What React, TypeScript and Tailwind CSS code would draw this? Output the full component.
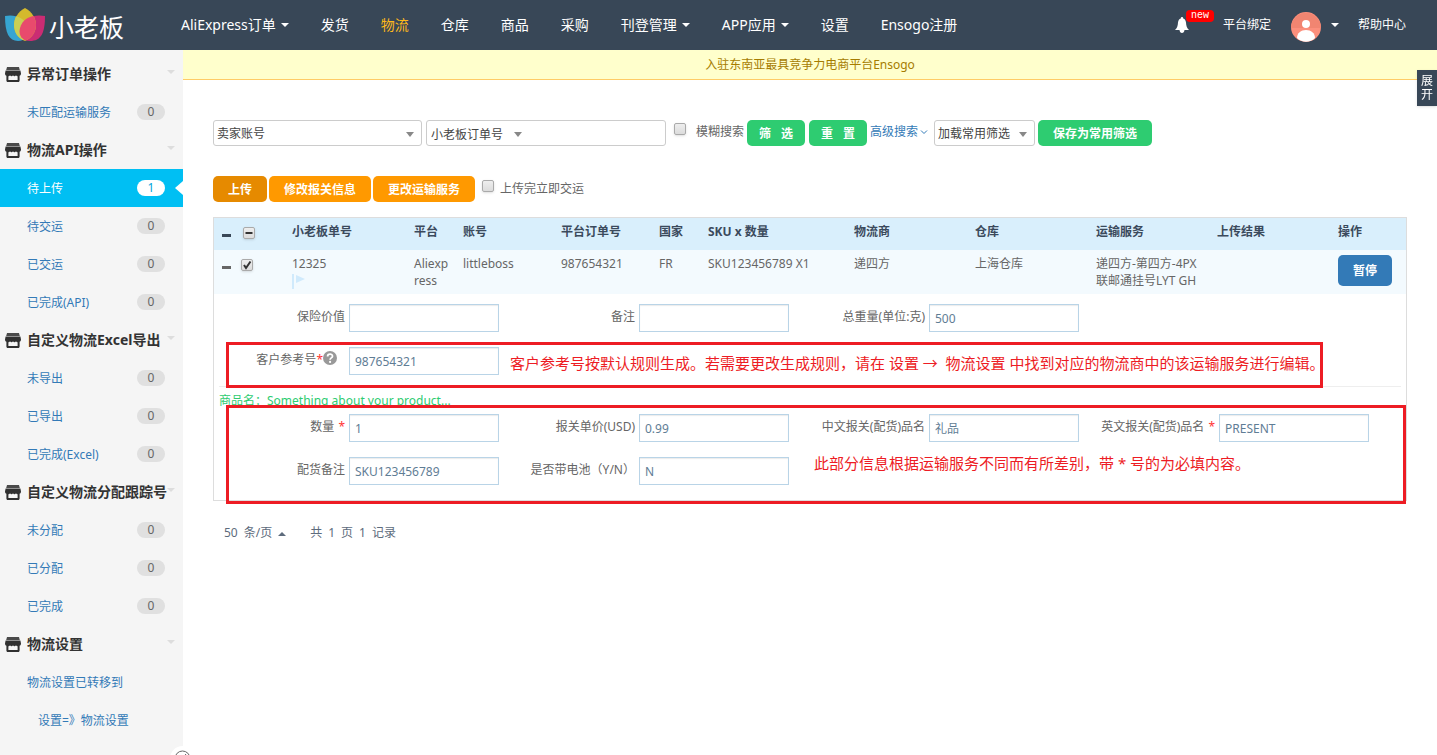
import type { ReactNode } from "react";

const navItems = [
  { label: "AliExpress订单", caret: true },
  { label: "发货" },
  { label: "物流", active: true },
  { label: "仓库" },
  { label: "商品" },
  { label: "采购" },
  { label: "刊登管理", caret: true },
  { label: "APP应用", caret: true },
  { label: "设置" },
  { label: "Ensogo注册" },
];

const menu = [
  { title: "异常订单操作", items: [{ label: "未匹配运输服务", count: 0 }] },
  {
    title: "物流API操作",
    items: [
      { label: "待上传", count: 1, active: true },
      { label: "待交运", count: 0 },
      { label: "已交运", count: 0 },
      { label: "已完成(API)", count: 0 },
    ],
  },
  {
    title: "自定义物流Excel导出",
    items: [
      { label: "未导出", count: 0 },
      { label: "已导出", count: 0 },
      { label: "已完成(Excel)", count: 0 },
    ],
  },
  {
    title: "自定义物流分配跟踪号",
    items: [
      { label: "未分配", count: 0 },
      { label: "已分配", count: 0 },
      { label: "已完成", count: 0 },
    ],
  },
];

const Caret = ({ className = "" }: { className?: string }) => (
  <svg viewBox="0 0 8 4" className={`h-1 w-2 shrink-0 fill-current ${className}`}>
    <path d="M0 0h8L4 4z" />
  </svg>
);

const StoreIcon = () => (
  <svg viewBox="0 0 16 15" className="h-[15px] w-4 shrink-0">
    <path fill="#4a4a4a" d="M2 0h12l.8 3H1.200z" />
    <path
      fill="#303030"
      d="M.6 3.500h14.800L16 6.500c0 1.300-.6 2-1.400 2.200V13.500c0 .9-.5 1.500-1.400 1.500H2.800c-.9 0-1.400-.6-1.400-1.500V8.700C.6 8.500 0 7.800 0 6.500z"
    />
    <path
      fill="#f5f5f5"
      d="M3.400 9.200c.8 0 1.300-.4 1.600-1 .4.700.9 1 1.500 1s1.200-.3 1.500-1c.3.7.9 1 1.500 1s1.100-.3 1.500-1c.3.6.8 1 1.600 1V13H3.400z"
    />
  </svg>
);

const yellowPetal = "M20 0c7 4 11 10 11 17 0 7-4 13-11 16C12 30 9 23 9 17 9 10 13 4 20 0z";
const bluePetal = "M0 8c10-2 20 2 22 10 2 9-2 15-9 15C4 33 0 25 0 8z";
const pinkPetal = "M40 8c-10-2-22 1-25 12-2 8 3 13 10 13 11 0 15-8 15-25z";

const Logo = () => (
  <a href="#" className="flex w-[165px] shrink-0 items-center gap-1 pl-[5px] text-white">
    <svg viewBox="0 0 40 34" className="h-[34px] w-10">
      <clipPath id="petal">
        <path d={yellowPetal} />
      </clipPath>
      <path fill="#36a5d2" d={bluePetal} />
      <path fill="#cb2c73" d={pinkPetal} />
      <path fill="#d4b92c" d={yellowPetal} />
      <g clipPath="url(#petal)">
        <path fill="#c9cf55" d={bluePetal} />
        <path fill="#e84a6d" d={pinkPetal} />
      </g>
    </svg>
    <span className="pt-1 text-[25px] leading-[46px]">小老板</span>
  </a>
);

const Header = () => (
  <header className="flex h-[50px] items-center bg-[#384757] text-white">
    <Logo />
    <nav className="flex">
      {navItems.map((item) => (
        <a
          key={item.label}
          href="#"
          className={`flex items-center gap-[5px] px-4 text-sm leading-[50px] whitespace-nowrap ${
            item.active ? "text-[#ffba1a]" : ""
          }`}
        >
          {item.label}
          {item.caret && <Caret />}
        </a>
      ))}
    </nav>
    <div className="ml-auto flex items-center pr-[31px] text-xs whitespace-nowrap">
      <button type="button" aria-label="消息" className="relative mr-[34px]">
        <svg viewBox="0 0 14 16" className="h-4 w-3.5 fill-white">
          <path d="M7 0c.8 0 1.200.6 1.200 1.400C10 2 10.800 3.500 11 5.500c.2 3 .8 5.500 3 7.500H0c2.200-2 2.800-4.500 3-7.500.2-2 1-3.500 2.800-4.100C5.800.6 6.200 0 7 0zM4.500 13h5C9.300 15 8.300 16 7 16s-2.300-1-2.500-3z" />
        </svg>
        <span className="absolute -top-[7px] left-[11px] h-3 w-7 rounded bg-[#f00] text-center font-['Liberation_Mono',monospace] text-[10px] leading-3">
          new
        </span>
      </button>
      <a href="#">平台绑定</a>
      <button type="button" aria-label="账户" className="mr-[19px] ml-5 flex items-center gap-2.5">
        <svg viewBox="0 0 30 30" className="mt-1 size-[30px]">
          <circle cx="15" cy="15" r="15" fill="#fc8f7c" />
          <path fill="#f18571" d="M0 16a15 15 0 0 1 30 0z" />
          <circle cx="15" cy="12" r="4" fill="#fff" />
          <path fill="#fff" d="M6 26c0-5 4-8 9-8s9 3 9 8c-5 5-13 5-18 0z" />
        </svg>
        <Caret />
      </button>
      <a href="#">帮助中心</a>
    </div>
  </header>
);

const MenuTitle = ({ children }: { children: ReactNode }) => (
  <h2 className="flex h-[38px] items-center pr-2 pl-[5px] text-sm font-bold whitespace-nowrap text-[#333]">
    <StoreIcon />
    <span className="ml-1.5 flex-1">{children}</span>
    <Caret className="mb-1 text-[#ddd]" />
  </h2>
);

const Sidebar = () => (
  <aside className="w-[183px] shrink-0 bg-[#f5f5f5] pt-[5px] text-xs text-[#337ab7]">
    {menu.map((group) => (
      <section key={group.title}>
        <MenuTitle>{group.title}</MenuTitle>
        {group.items.map((item) => (
          <a
            key={item.label}
            href="#"
            className={`relative flex h-[38px] items-center justify-between pr-[18px] pl-[27px] ${
              item.active ? "bg-[#00bff3] text-white" : ""
            }`}
          >
            <span className="pt-0.5">{item.label}</span>
            <span
              className={`h-4 w-7 rounded-full text-center leading-4 ${
                item.active ? "bg-white text-[#00a5dc]" : "bg-[#e0e0e0] text-[#666]"
              }`}
            >
              {item.count}
            </span>
            {item.active && (
              <svg viewBox="0 0 8 14" className="absolute right-0 h-3.5 w-2 fill-white">
                <path d="M8 0v14L0 7z" />
              </svg>
            )}
          </a>
        ))}
      </section>
    ))}
    <MenuTitle>物流设置</MenuTitle>
    <a href="#" className="block pt-0.5 pl-[27px] leading-9">
      物流设置已转移到
    </a>
    <a href="#" className="block pt-0.5 pl-[38px] leading-9">
      设置=》物流设置
    </a>
  </aside>
);

const DropDown = ({
  label,
  wrap,
  arrow,
  pad = "pl-[3px]",
}: {
  label: string;
  wrap: string;
  arrow: string;
  pad?: string;
}) => (
  <span className={`relative flex h-[26px] ${wrap}`}>
    <select aria-label={label} className={`w-full appearance-none rounded bg-transparent pt-0.5 text-[#444] outline-none ${pad}`}>
      <option>{label}</option>
    </select>
    <svg viewBox="0 0 8 5" className={`pointer-events-none absolute top-[11px] h-[5px] w-2 fill-[#888] ${arrow}`}>
      <path d="M0 0h8L4 5z" />
    </svg>
  </span>
);

const CheckBox = ({ id, label, state }: { id: string; label?: string; state?: "checked" | "mixed" }) => (
  <span className="relative inline-block size-3">
    <input
      id={id}
      type="checkbox"
      aria-label={label}
      defaultChecked={state === "checked"}
      className="block size-3 appearance-none rounded-[2px] border border-[#aaa] bg-linear-to-b from-[#eee] to-[#dcdcdc] shadow-sm"
    />
    {state && (
      <svg viewBox="0 0 12 12" className="pointer-events-none absolute inset-0 size-3 fill-none stroke-[#333] stroke-2">
        <path d={state === "checked" ? "M3 6l2 3 4.500-6.500" : "M2.500 6h7"} />
      </svg>
    )}
  </span>
);

const greenBtn = "h-[26px] rounded-[5px] bg-[#2ecc71] pt-0.5 font-bold text-white whitespace-nowrap";
const orangeBtn = "h-[26px] rounded-[5px] px-[15px] pt-0.5 font-bold text-white whitespace-nowrap";

const Filters = () => (
  <form className="flex items-start">
    <DropDown label="卖家账号" wrap="w-[209px] mr-1 rounded-[3px] border border-[#ccc]" arrow="right-[7px]" />
    <div className="flex h-[26px] w-60 rounded-[3px] border border-[#ccc]">
      <DropDown label="小老板订单号" wrap="w-[98px]" arrow="right-[3px]" pad="pl-1" />
      <input aria-label="订单号" className="min-w-0 flex-1 outline-none" />
    </div>
    <span className="mt-[3px] ml-2 flex">
      <CheckBox id="fuzzy" />
    </span>
    <label htmlFor="fuzzy" className="mr-[3px] ml-2.5 leading-6">
      模糊搜索
    </label>
    <button type="button" className={`${greenBtn} mr-1 flex w-[58px] items-center justify-center gap-2.5`}>
      <span>筛</span>
      <span>选</span>
    </button>
    <button type="button" className={`${greenBtn} mr-[3px] flex w-[58px] items-center justify-center gap-2.5`}>
      <span>重</span>
      <span>置</span>
    </button>
    <a href="#" className="mr-1.5 flex items-center gap-0.5 leading-6 text-[#337ab7]">
      高级搜索
      <svg viewBox="0 0 8 5" className="h-[5px] w-2 fill-none stroke-current">
        <path d="M1 .5l3 3 3-3" />
      </svg>
    </a>
    <DropDown label="加载常用筛选" wrap="w-[101px] mr-[3px] rounded-[3px] border border-[#ccc]" arrow="right-[7px]" />
    <button type="button" className={`${greenBtn} px-[15px]`}>
      保存为常用筛选
    </button>
  </form>
);

const Field = ({
  id,
  label,
  value = "",
  children,
}: {
  id: string;
  label: string;
  value?: string;
  children?: ReactNode;
}) => (
  <div className="flex h-7 items-start gap-1">
    <label htmlFor={id} className="flex w-[126px] justify-end leading-[26px] whitespace-nowrap">
      {label}
      {children}
    </label>
    <input
      id={id}
      defaultValue={value}
      className="h-7 w-[150px] border border-[#b9d4e7] bg-white px-[5px] text-[#5f7d95] shadow-[inset_0_1px_1px_rgba(0,0,0,0.08)] outline-none"
    />
  </div>
);

const Required = () => <span className="pl-1 text-[#f33]">*</span>;

const HelpIcon = () => (
  <svg viewBox="0 0 14 14" className="mt-1 mr-2 size-3.5">
    <circle cx="7" cy="7" r="7" fill="#999" />
    <path d="M4.600 5.400C4.600 2.400 9.500 2.400 9.500 5.200 9.500 6.900 7.100 6.900 7.100 8.700" fill="none" stroke="#fff" strokeWidth="1.800" />
    <circle cx="7.100" cy="10.900" r="1.100" fill="#fff" />
  </svg>
);

const fieldGrid = "grid grid-cols-[repeat(4,290px)]";

const OrderDetails = () => (
  <div className="pt-2.5 pr-[5px] pb-[15px] pl-[5px]">
    <div className={fieldGrid}>
      <Field id="insurance" label="保险价值" />
      <Field id="remark" label="备注" />
      <Field id="weight" label="总重量(单位:克)" value="500" />
    </div>
    <div className={`relative mt-[15px] w-[1160px] ${fieldGrid}`}>
      <Field id="reference" label="客户参考号" value="987654321">
        <span className="text-[#f33]">*</span>
        <HelpIcon />
      </Field>
      <p className="col-span-3 h-7 pl-px text-[15px] leading-8 whitespace-nowrap text-[#ed1c24]">
        客户参考号按默认规则生成。若需要更改生成规则，请在 设置 →&nbsp; 物流设置 中找到对应的物流商中的该运输服务进行编辑。
      </p>
      <div className="pointer-events-none absolute -top-[5px] right-14 -bottom-[13px] left-[7px] z-10 border-3 border-[#ed1c24]" />
    </div>
    <p className="mt-[11px] border-t border-[#eee] leading-[27px] text-[#2ecc71]">商品名：Something about your product...</p>
    <div className={`relative w-[1160px] gap-y-[15px] ${fieldGrid}`}>
      <Field id="quantity" label="数量" value="1">
        <Required />
      </Field>
      <Field id="price" label="报关单价(USD)" value="0.99" />
      <Field id="name-cn" label="中文报关(配货)品名" value="礼品" />
      <Field id="name-en" label="英文报关(配货)品名" value="PRESENT">
        <Required />
      </Field>
      <Field id="note" label="配货备注" value="SKU123456789" />
      <Field id="battery" label="是否带电池（Y/N）" value="N" />
      <p className="col-span-2 pl-[15px] text-[15px] leading-3 whitespace-nowrap text-[#ed1c24]">
        此部分信息根据运输服务不同而有所差别，带 * 号的为必填内容。
      </p>
      <div className="pointer-events-none absolute -top-[9px] -right-[27px] -bottom-[19px] left-[7px] z-10 border-3 border-[#ed1c24]" />
    </div>
  </div>
);

const OrderTable = () => (
  <table className="mt-[15px] w-full table-fixed border-separate border-spacing-0 border border-[#ddd] text-left">
    <colgroup>
      <col className="w-[70px]" />
      <col className="w-[122px]" />
      <col className="w-[49px]" />
      <col className="w-[98px]" />
      <col className="w-[98px]" />
      <col className="w-[49px]" />
      <col className="w-[146px]" />
      <col className="w-[121px]" />
      <col className="w-[121px]" />
      <col className="w-[121px]" />
      <col className="w-[121px]" />
      <col className="w-[76px]" />
    </colgroup>
    <thead>
      <tr className="h-8 bg-[#d9effc] align-top leading-[17px] whitespace-nowrap text-[#3b4a5c] *:p-0 *:pt-[5px] *:pl-2">
        <th>
          <span className="flex items-center gap-3 pt-1">
            <span className="mt-[5px] h-[3px] w-[9px] bg-[#384757]" />
            <CheckBox id="all" label="全选" state="mixed" />
          </span>
        </th>
        <th>小老板单号</th>
        <th>平台</th>
        <th>账号</th>
        <th>平台订单号</th>
        <th>国家</th>
        <th>SKU x 数量</th>
        <th>物流商</th>
        <th>仓库</th>
        <th>运输服务</th>
        <th>上传结果</th>
        <th>操作</th>
      </tr>
    </thead>
    <tbody>
      <tr className="h-11 bg-[#f3fafe] align-top leading-[17px] break-all *:p-0 *:pt-[5px] *:pr-1 *:pl-2">
        <td>
          <span className="flex items-center gap-2.5 pt-1">
            <span className="mt-[5px] h-[3px] w-[9px] bg-[#666]" />
            <CheckBox id="order" label="选择订单" state="checked" />
          </span>
        </td>
        <td>
          12325
          <svg viewBox="0 0 13 15" className="mt-0.5 h-[15px] w-[13px] fill-[#d0eafc]">
            <path d="M0 0h2v15H0zM4 1l9 4-9 4z" />
          </svg>
        </td>
        <td>Aliexpress</td>
        <td>littleboss</td>
        <td>987654321</td>
        <td>FR</td>
        <td>SKU123456789 X1</td>
        <td>递四方</td>
        <td>上海仓库</td>
        <td>递四方-第四方-4PX联邮通挂号LYT GH</td>
        <td />
        <td>
          <button type="button" className="h-[31px] w-[54px] rounded-[5px] bg-[#337ab7] font-bold text-white">
            暂停
          </button>
        </td>
      </tr>
      <tr>
        <td colSpan={12} className="p-0">
          <OrderDetails />
        </td>
      </tr>
    </tbody>
  </table>
);

const Pager = () => (
  <div className="mt-6 flex items-center gap-1.5 pl-[11px] text-[#5d6b7c]">
    <button type="button" className="mr-[18px] flex items-center gap-1.5">
      <span>50</span>
      <span>条/页</span>
      <Caret className="mt-0.5 rotate-180" />
    </button>
    <span>共</span>
    <span>1</span>
    <span>页</span>
    <span>1</span>
    <span>记录</span>
  </div>
);

export default function App() {
  return (
    <div
      lang="zh-CN"
      className="flex min-h-screen flex-col bg-white font-['Noto_Sans','Noto_Sans_CJK_SC',sans-serif] text-xs text-[#666]"
    >
      <Header />
      <div className="flex flex-1">
        <Sidebar />
        <main className="min-w-0 flex-1">
          <p className="border-b border-[#fc6] bg-[#ffc] text-center leading-[29px] text-[#a67c00]">
            入驻东南亚最具竞争力电商平台Ensogo
          </p>
          <div className="px-[30px] pt-10">
            <Filters />
            <div className="mt-[30px] flex items-start gap-0.5">
              <button type="button" className={`${orangeBtn} bg-[#e68a00]`}>
                上传
              </button>
              <button type="button" className={`${orangeBtn} bg-[#ff9900]`}>
                修改报关信息
              </button>
              <button type="button" className={`${orangeBtn} bg-[#ff9900]`}>
                更改运输服务
              </button>
              <span className="mt-1 ml-[5px] flex">
                <CheckBox id="ship-now" />
              </span>
              <label htmlFor="ship-now" className="ml-1 leading-[26px]">
                上传完立即交运
              </label>
            </div>
            <OrderTable />
            <Pager />
          </div>
        </main>
      </div>
      <button
        type="button"
        className="fixed top-[70px] right-0 w-5 bg-[#384757] py-1 text-center text-xs leading-[14px] text-white shadow"
      >
        展开
      </button>
      <div className="fixed -bottom-4 left-[170px] size-[25px] rounded-full bg-white p-1">
        <svg viewBox="0 0 17 17" className="size-[17px] fill-none stroke-[#666]">
          <circle cx="8.500" cy="8.500" r="7.500" />
          <path d="M8 9l4-5" />
        </svg>
      </div>
    </div>
  );
}
